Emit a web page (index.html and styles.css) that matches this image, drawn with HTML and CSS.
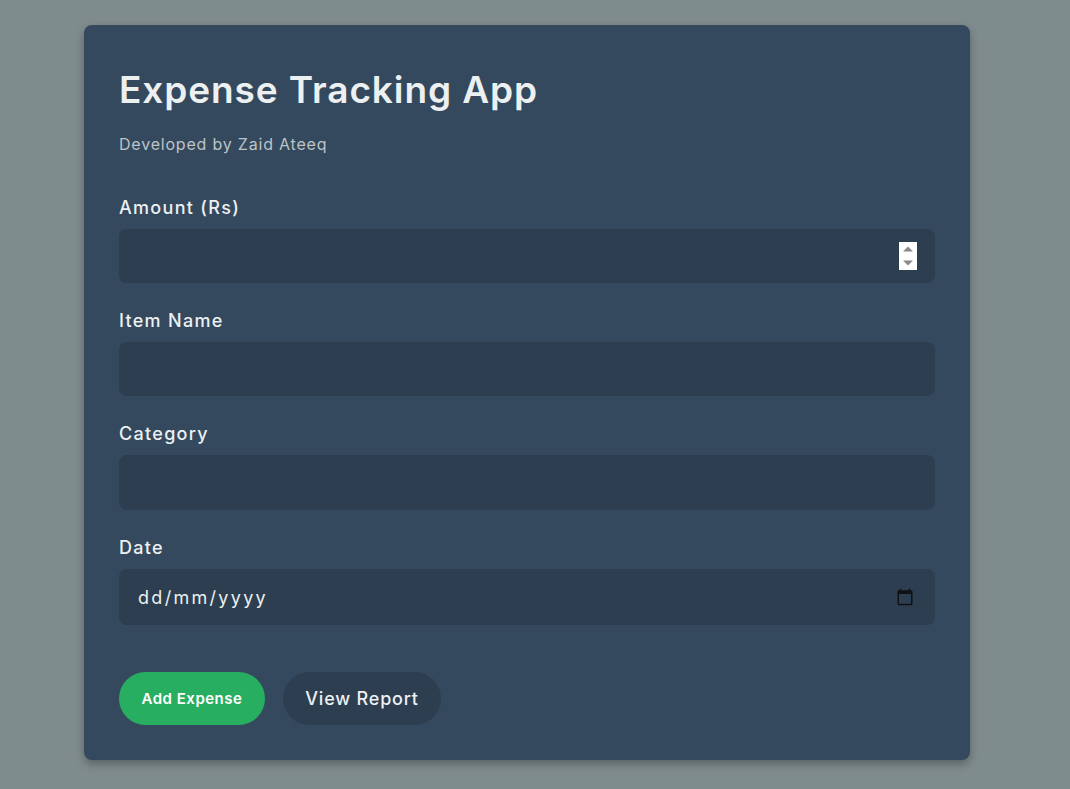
FILE: index.html
```html
<!DOCTYPE html>
<html lang="en-GB">
<head>
<meta charset="utf-8">
<title>Expense Tracking App</title>
<link rel="stylesheet" href="styles.css">
</head>
<body>
<main class="card">
  <h1 class="title">Expense Tracking App</h1>
  <p class="subtitle">Developed by Zaid Ateeq</p>
  <form class="form">
    <div class="group">
      <label class="label" for="amount">Amount (Rs)</label>
      <div class="field">
        <input class="field-input" id="amount" type="text" inputmode="numeric">
        <span class="spinner" aria-hidden="true">
          <svg width="18" height="28" viewBox="0 0 18 28">
            <polygon points="4,9.5 14,9.5 9,4.5" fill="#8a8a8a"/>
            <polygon points="4,18.5 14,18.5 9,23.5" fill="#8a8a8a"/>
          </svg>
        </span>
      </div>
    </div>
    <div class="group">
      <label class="label" for="item">Item Name</label>
      <div class="field">
        <input class="field-input" id="item" type="text">
      </div>
    </div>
    <div class="group">
      <label class="label" for="category">Category</label>
      <div class="field field-category">
        <input class="field-input" id="category" type="text">
      </div>
    </div>
    <div class="group">
      <label class="label" for="date">Date</label>
      <div class="field field-date">
        <input class="field-input date-input" id="date" type="text" placeholder="dd/mm/yyyy">
        <svg class="cal-icon" width="18" height="18" viewBox="0 0 24 24" aria-hidden="true">
          <path fill="#111" d="M20 3h-1V1h-2v2H7V1H5v2H4c-1.1 0-2 .9-2 2v16c0 1.1.9 2 2 2h16c1.1 0 2-.9 2-2V5c0-1.1-.9-2-2-2zm0 18H4V8h16v13z"/>
        </svg>
      </div>
    </div>
    <div class="actions">
      <button type="button" class="btn btn-add">Add Expense</button>
      <button type="button" class="btn btn-report">View Report</button>
    </div>
  </form>
</main>
</body>
</html>
```
FILE: styles.css
```css
* { box-sizing: border-box; }
html, body { margin: 0; padding: 0; }
body {
  background: #7f8c8d;
  font-family: "Inter", "Open Sans", sans-serif;
  color: #ecf0f1;
  padding: 25px 0 0 84px;
  min-height: 789px;
}
.card {
  width: 886px;
  background: #34495e;
  border-radius: 8px;
  padding: 35px;
  box-shadow: 0 4px 10px rgba(0, 0, 0, 0.3);
}
.title {
  margin: 2px 0 0;
  font-size: 37px;
  font-weight: 600;
  letter-spacing: 0.9px;
  line-height: 56px;
  color: #ecf0f1;
}
.subtitle {
  margin: 14px 0 0;
  font-size: 16px;
  letter-spacing: 0.8px;
  line-height: 24px;
  color: #bdc3c7;
}
.form {
  margin-top: 39px;
  display: flex;
  flex-direction: column;
}
.group {
  display: flex;
  flex-direction: column;
  margin-bottom: 25px;
}
.label {
  font-size: 18px;
  font-weight: 500;
  letter-spacing: 1.3px;
  line-height: 26px;
  margin-bottom: 8px;
}
.field {
  height: 54px;
  width: 100%;
  border-radius: 8px;
  background: #2c3e50;
  display: flex;
  align-items: center;
  padding: 0 18px 0 19px;
}
.field-input {
  flex: 1;
  min-width: 0;
  height: 100%;
  border: none;
  outline: none;
  background: transparent;
  color: #ecf0f1;
  font-family: inherit;
  font-size: 18px;
  padding: 0;
}
.spinner {
  width: 18px;
  height: 28px;
  background: #fff;
  display: flex;
}
.field-category { height: 55px; }
.field-date {
  height: 56px;
  padding-right: 21px;
}
.date-input {
  letter-spacing: 2.3px;
}
.date-input::placeholder {
  color: #ecf0f1;
  opacity: 1;
}
.cal-icon { flex: none; }
.actions {
  display: flex;
  gap: 18px;
  margin-top: 22px;
}
.btn {
  border: none;
  border-radius: 27px;
  height: 53px;
  font-family: inherit;
  cursor: pointer;
  padding: 0;
}
.btn-add {
  width: 146px;
  background: #27ae60;
  color: #fff;
  font-size: 15px;
  font-weight: 600;
  letter-spacing: 0.5px;
}
.btn-report {
  width: 158px;
  background: #2c3e50;
  color: #ecf0f1;
  font-size: 18px;
  font-weight: 500;
  letter-spacing: 0.8px;
}
```
